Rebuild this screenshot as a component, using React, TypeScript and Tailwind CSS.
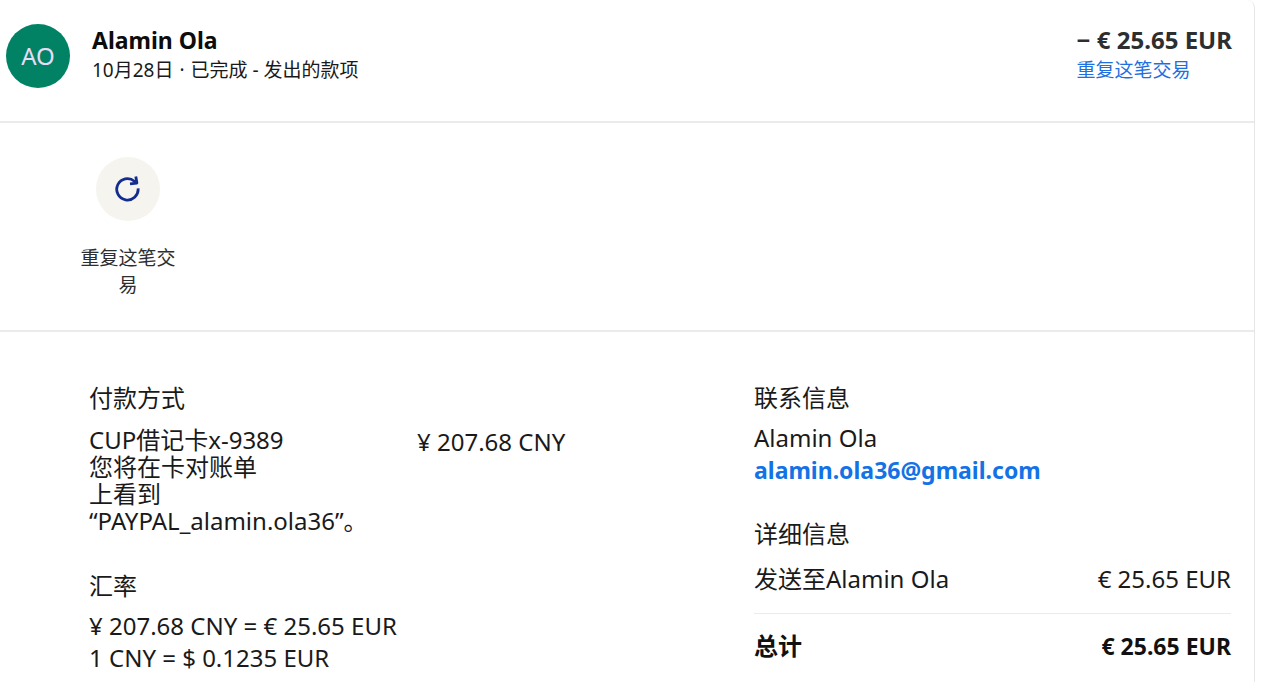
import { ReactNode } from "react";

function SectionTitle({ children }: { children: ReactNode }) {
  return <h2 className="mb-1 text-2xl leading-8">{children}</h2>;
}

function RepeatIcon() {
  return (
    <svg
      className="h-7 w-7 text-[#142c8e]"
      viewBox="0 0 28 28"
      fill="none"
      stroke="currentColor"
      strokeWidth="2.8"
      strokeLinejoin="round"
      aria-hidden="true"
    >
      <path d="M24.1 13.4A10.7 10.7 0 1 1 20.4 6.2L22.6 8" />
      <path d="M21.8 1.4L22.9 8.1L16 8.8" />
    </svg>
  );
}

export default function App() {
  return (
    <div className="min-h-screen bg-white pr-[25px] font-['Noto_Sans','Noto_Sans_CJK_SC',sans-serif] text-[#1a1a1a]">
      <main className="min-h-screen rounded-tr-lg border-r border-[#e6e6e6]">
        {/* Header */}
        <header className="flex h-[123px] items-start border-b-2 border-[#ebebeb] pt-6 pr-[22px] pl-[6px]">
          <div className="grid h-16 w-16 place-content-center rounded-full bg-[#018265] text-2xl text-[#e8dcf5]">
            AO
          </div>
          <div className="ml-[22px]">
            <h1 className="text-[23px] leading-8 font-bold text-[#0c0c0c]">
              Alamin Ola
            </h1>
            <p className="text-[19px] leading-7">
              10月28日<span className="mx-[6px]">·</span>已完成 - 发出的款项
            </p>
          </div>
          <div className="ml-auto">
            <p className="text-2xl leading-8 font-bold text-[#2c2e2f]">
              − € 25.65 EUR
            </p>
            <a href="#repeat" className="block text-[19px] leading-7 text-[#1f6fe0]">
              重复这笔交易
            </a>
          </div>
        </header>

        {/* Actions */}
        <section className="flex h-[209px] items-start border-b-2 border-[#ebebeb] pt-[34px] pl-20">
          <button type="button" className="flex w-24 flex-col items-center">
            <span className="grid h-16 w-16 place-content-center rounded-full bg-[#f5f4ef]">
              <RepeatIcon />
            </span>
            <span className="mt-6 text-[19px] leading-[27px] text-[#2c2e2f]">
              重复这笔交易
            </span>
          </button>
        </section>

        {/* Details */}
        <div className="grid grid-cols-[665fr_477fr] pt-[50px] pr-[23px] pl-[89px] text-2xl">
          <div>
            <section className="mb-9">
              <SectionTitle>付款方式</SectionTitle>
              <div className="flex pt-2">
                <p className="w-[328px] leading-[27px]">
                  CUP借记卡x-9389
                  <br />
                  您将在卡对账单
                  <br />
                  上看到
                  <br />
                  “PAYPAL_alamin.ola36”。
                </p>
                <p className="leading-8">¥ 207.68 CNY</p>
              </div>
            </section>
            <section>
              <SectionTitle>汇率</SectionTitle>
              <p className="pt-1 leading-8">¥ 207.68 CNY = € 25.65 EUR</p>
              <p className="leading-8">1 CNY = $ 0.1235 EUR</p>
            </section>
          </div>

          <div>
            <section className="mb-8">
              <SectionTitle>联系信息</SectionTitle>
              <p className="pt-1 leading-8">Alamin Ola</p>
              <a
                href="mailto:alamin.ola36@gmail.com"
                className="block text-[23px] leading-8 font-bold text-[#1272e6]"
              >
                alamin.ola36@gmail.com
              </a>
            </section>
            <section>
              <SectionTitle>详细信息</SectionTitle>
              <dl>
                <div className="flex justify-between border-b border-[#ebebeb] pt-[7px] pb-4 leading-9">
                  <dt>发送至Alamin Ola</dt>
                  <dd>€ 25.65 EUR</dd>
                </div>
                <div className="flex justify-between pt-[14px] leading-9 font-bold text-[#111111]">
                  <dt>总计</dt>
                  <dd className="text-[23px]">€ 25.65 EUR</dd>
                </div>
              </dl>
            </section>
          </div>
        </div>
      </main>
    </div>
  );
}
